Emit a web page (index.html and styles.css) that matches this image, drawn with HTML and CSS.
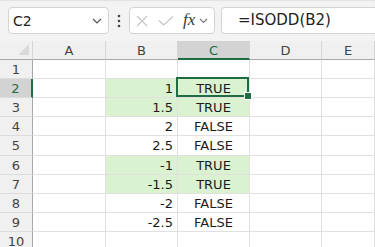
FILE: index.html
```html
<!DOCTYPE html>
<html lang="en">
<head>
    <meta charset="UTF-8">
    <title>ISODD</title>
    <link rel="stylesheet" href="styles.css">
</head>
<body>
    <div class="formula-bar">
        <div class="name-box">
            <span>C2</span>
            <svg class="chev" width="10" height="6" viewBox="0 0 10 6"><polyline points="1,1 5,5 9,1" fill="none" stroke="#555" stroke-width="1.2"/></svg>
        </div>
        <div class="dots">
            <svg width="4" height="14" viewBox="0 0 4 14"><circle cx="2" cy="2" r="1.3" fill="#444"/><circle cx="2" cy="7" r="1.3" fill="#444"/><circle cx="2" cy="12" r="1.3" fill="#444"/></svg>
        </div>
        <div class="fx-group">
            <svg class="icon-x" width="12" height="12" viewBox="0 0 12 12"><path d="M1 1 L11 11 M11 1 L1 11" stroke="#c4c4c4" stroke-width="1.1" fill="none"/></svg>
            <svg class="icon-ok" width="16" height="10" viewBox="0 0 16 10"><path d="M1 4.5 L5.5 9 L15 0.5" stroke="#c4c4c4" stroke-width="1.1" fill="none"/></svg>
            <span class="fx">fx</span>
            <svg class="chev-sm" width="9" height="6" viewBox="0 0 9 6"><polyline points="1,1 4.5,4.5 8,1" fill="none" stroke="#777" stroke-width="1.1"/></svg>
        </div>
        <div class="formula-input">=ISODD(B2)</div>
    </div>

    <div class="sheet">
        <div class="corner"><span class="tri"></span></div>
        <div class="col-head">A</div>
        <div class="col-head">B</div>
        <div class="col-head sel">C</div>
        <div class="col-head">D</div>
        <div class="col-head">E</div>

        <div class="row-head">1</div>
        <div class="cell"></div><div class="cell"></div><div class="cell"></div><div class="cell"></div><div class="cell"></div>

        <div class="row-head sel">2</div>
        <div class="cell"></div><div class="cell num hit">1</div><div class="cell bool hit active">TRUE</div><div class="cell"></div><div class="cell"></div>

        <div class="row-head">3</div>
        <div class="cell"></div><div class="cell num hit">1.5</div><div class="cell bool hit">TRUE</div><div class="cell"></div><div class="cell"></div>

        <div class="row-head">4</div>
        <div class="cell"></div><div class="cell num">2</div><div class="cell bool">FALSE</div><div class="cell"></div><div class="cell"></div>

        <div class="row-head">5</div>
        <div class="cell"></div><div class="cell num">2.5</div><div class="cell bool">FALSE</div><div class="cell"></div><div class="cell"></div>

        <div class="row-head">6</div>
        <div class="cell"></div><div class="cell num hit">-1</div><div class="cell bool hit">TRUE</div><div class="cell"></div><div class="cell"></div>

        <div class="row-head">7</div>
        <div class="cell"></div><div class="cell num hit">-1.5</div><div class="cell bool hit">TRUE</div><div class="cell"></div><div class="cell"></div>

        <div class="row-head">8</div>
        <div class="cell"></div><div class="cell num">-2</div><div class="cell bool">FALSE</div><div class="cell"></div><div class="cell"></div>

        <div class="row-head">9</div>
        <div class="cell"></div><div class="cell num">-2.5</div><div class="cell bool">FALSE</div><div class="cell"></div><div class="cell"></div>

        <div class="row-head">10</div>
        <div class="cell"></div><div class="cell"></div><div class="cell"></div><div class="cell"></div><div class="cell"></div>
    </div>
</body>
</html>
```

FILE: styles.css
```css
* {
    box-sizing: border-box;
}
body {
    margin: 0;
    font-family: 'DejaVu Sans', sans-serif;
    background: #fff;
    color: #222;
    overflow: hidden;
}
.formula-bar {
    display: flex;
    align-items: flex-start;
    height: 41px;
    padding: 7px 0 0 8px;
    background: #f3f3f3;
    box-shadow: inset 0 1px 1px #e2e2e2;
}
.name-box {
    display: flex;
    align-items: center;
    justify-content: space-between;
    width: 101px;
    height: 27px;
    padding: 0 6px 0 4px;
    background: #fff;
    border: 1px solid #d4d4d4;
    border-radius: 4px;
    font-size: 14px;
    color: #222;
}
.name-box .chev {
    margin-top: 1px;
}
.dots {
    display: flex;
    justify-content: center;
    width: 20px;
    padding-top: 7px;
}
.fx-group {
    display: flex;
    align-items: center;
    width: 86px;
    height: 27px;
    padding-left: 6px;
    background: #fff;
    border: 1px solid #d4d4d4;
    border-radius: 4px;
}
.icon-x {
    margin-top: 1px;
}
.icon-ok {
    margin-left: 10px;
    margin-top: 1px;
}
.fx {
    margin-left: 9px;
    font-family: 'Liberation Serif', serif;
    font-style: italic;
    font-size: 17px;
    color: #3a3a3a;
    margin-top: -2px;
}
.chev-sm {
    margin-left: 4px;
    margin-top: 1px;
}
.formula-input {
    flex: 1;
    height: 27px;
    margin-left: 6px;
    padding: 3px 0 0 16px;
    background: #fff;
    border: 1px solid #d4d4d4;
    border-right: none;
    border-radius: 4px 0 0 4px;
    font-size: 15px;
    color: #222;
}

.sheet {
    display: grid;
    grid-template-columns: 33px 73px 72px 72px 72px 1fr;
    grid-template-rows: 19px 19px 19px 19px 19px 20px 19px 19px 19px 19px 19px;
    font-size: 13px;
}
.corner, .col-head, .row-head {
    background: #f0f0f0;
    color: #444;
}
.corner {
    position: relative;
    border-right: 1px solid #d6d6d6;
    border-bottom: 1px solid #a8a8a8;
}
.tri {
    position: absolute;
    right: 3px;
    bottom: 4px;
    width: 0;
    height: 0;
    border-left: 11px solid transparent;
    border-bottom: 11px solid #dadada;
}
.col-head {
    display: flex;
    align-items: center;
    justify-content: center;
    border-right: 1px solid #d6d6d6;
    border-bottom: 1px solid #a8a8a8;
    padding-top: 1px;
}
.col-head.sel {
    background: #d3d3d3;
    color: #1d6b3f;
    border-bottom: 2px solid #1f6e43;
}
.row-head {
    display: flex;
    align-items: center;
    justify-content: center;
    border-right: 1px solid #a8a8a8;
    border-bottom: 1px solid #dcdcdc;
}
.row-head.sel {
    background: #d3d3d3;
    color: #1d6b3f;
    border-right: 2px solid #1f6e43;
}
.cell {
    display: flex;
    align-items: center;
    padding: 0 4px;
    border-right: 1px solid #e0e0e0;
    border-bottom: 1px solid #e0e0e0;
    color: #1a1a1a;
}
.num {
    justify-content: flex-end;
}
.bool {
    justify-content: center;
}
.hit {
    background: #daf2d0;
}
.active {
    position: relative;
}
.active::after {
    content: "";
    position: absolute;
    top: -2px;
    left: -2px;
    right: 0;
    bottom: 0;
    border: 2px solid #1f6e43;
}
.active::before {
    content: "";
    position: absolute;
    right: -3px;
    bottom: -3px;
    width: 6px;
    height: 6px;
    background: #1f6e43;
    border: 1px solid #fff;
    z-index: 2;
}
```
